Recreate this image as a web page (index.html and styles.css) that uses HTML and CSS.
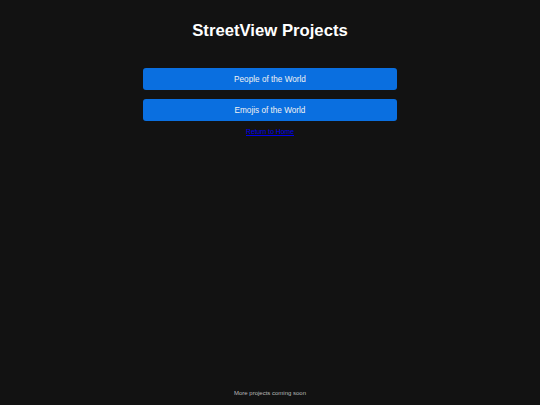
FILE: index.html
```html
<!DOCTYPE html>
<html lang="en">
<head>
<meta charset="utf-8">
<title>StreetView Projects</title>
<link rel="stylesheet" href="styles.css">
</head>
<body>
<div class="page">
  <main class="content">
    <h1 class="title">StreetView Projects</h1>
    <nav class="projects">
      <a class="project-btn" href="#">People of the World</a>
      <a class="project-btn" href="#">Emojis of the World</a>
    </nav>
    <a class="home-link" href="#">Return to Home</a>
  </main>
  <footer class="footer">More projects coming soon</footer>
</div>
</body>
</html>
```
FILE: styles.css
```css
html, body {
  margin: 0;
  padding: 0;
  background: #121212;
}
body {
  font-family: "Liberation Sans", Arial, sans-serif;
  color: #ffffff;
}
.page {
  min-height: 100vh;
  display: flex;
  flex-direction: column;
  align-items: center;
  box-sizing: border-box;
}
.content {
  width: 254px;
  display: flex;
  flex-direction: column;
  align-items: center;
  padding-top: 21px;
}
.title {
  margin: 0;
  font-size: 16.7px;
  line-height: 20px;
  font-weight: bold;
  color: #ffffff;
}
.projects {
  margin-top: 27px;
  width: 100%;
  display: flex;
  flex-direction: column;
  gap: 9px;
}
.project-btn {
  display: flex;
  align-items: center;
  justify-content: center;
  height: 22px;
  background: #0a6fe0;
  border-radius: 3px;
  color: #f2f2f2;
  font-size: 8.2px;
  text-decoration: none;
}
.home-link {
  margin-top: 7px;
  font-size: 6.8px;
  line-height: 8px;
  color: #0000ee;
  text-decoration: underline;
}
.footer {
  margin-top: auto;
  font-size: 6px;
  line-height: 8px;
  color: #b8b8b8;
  padding-bottom: 8px;
}
```
